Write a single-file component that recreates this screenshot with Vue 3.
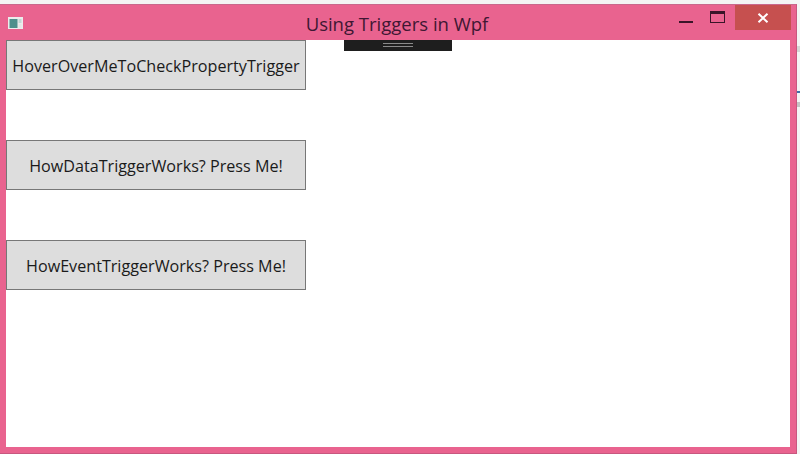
<template>
  <div class="desktop">
    <div class="window">
      <div class="title-bar">
        <svg class="app-icon" width="15" height="12" viewBox="0 0 15 12">
          <rect x="0" y="0" width="15" height="12" fill="#ececec" />
          <rect x="1.5" y="2" width="8" height="9" fill="#4f8f8c" />
          <rect x="10.5" y="2" width="3" height="4" fill="#c3d8d6" />
          <rect x="10.5" y="7" width="3" height="4" fill="#e6e6e6" />
        </svg>
        <span class="title">Using Triggers in Wpf</span>
        <div class="controls">
          <span class="min-btn"></span>
          <span class="max-btn"></span>
          <span class="close-btn">
            <svg width="12" height="10" viewBox="0 0 12 10">
              <path d="M1.5 0.8 L10.5 9.2 M10.5 0.8 L1.5 9.2" stroke="#fff" stroke-width="2" fill="none" />
            </svg>
          </span>
        </div>
      </div>
      <div class="content">
        <button v-for="label in buttons" :key="label" class="trigger-btn">{{ label }}</button>
        <div class="adorner"><span class="grip"></span></div>
      </div>
    </div>
    <div class="desktop-edge">
      <span class="edge-mark grey"></span>
      <span class="edge-mark blue"></span>
      <span class="edge-mark dim"></span>
    </div>
  </div>
</template>

<script setup>
const buttons = [
  'HoverOverMeToCheckPropertyTrigger',
  'HowDataTriggerWorks? Press Me!',
  'HowEventTriggerWorks? Press Me!'
]
</script>

<style>
html,
body {
  margin: 0;
  background: #fff;
}
</style>

<style scoped>
.desktop {
  display: flex;
  width: 800px;
  height: 454px;
  overflow: hidden;
  background: #f4f4f4;
  font-family: "Open Sans", "Noto Sans", sans-serif;
}

.window {
  display: flex;
  flex-direction: column;
  box-sizing: border-box;
  width: 797px;
  height: 450px;
  margin-top: 4px;
  background: #e9638f;
  border-top: 1px solid #c9688c;
  border-right: 1px solid #c8577f;
  border-bottom: 1px solid #c8577f;
}

.title-bar {
  position: relative;
  display: flex;
  align-items: center;
  justify-content: center;
  height: 35px;
  flex-shrink: 0;
}

.app-icon {
  position: absolute;
  left: 8px;
  top: 12px;
}

.title {
  margin-top: 1px;
  margin-right: 2px;
  font-size: 18.5px;
  color: #3f1733;
}

.controls {
  position: absolute;
  top: 0;
  right: 5px;
  display: flex;
  align-items: flex-start;
}

.min-btn {
  width: 14px;
  height: 2px;
  margin-top: 16px;
  margin-right: 17px;
  background: #3a1428;
}

.max-btn {
  box-sizing: border-box;
  width: 15px;
  height: 12px;
  margin-top: 6px;
  margin-right: 10px;
  border: 1px solid #3a1428;
  border-top-width: 3px;
}

.close-btn {
  display: flex;
  align-items: center;
  justify-content: center;
  width: 56px;
  height: 25px;
  background: #c6504f;
}

.content {
  position: relative;
  display: flex;
  flex-direction: column;
  align-items: flex-start;
  gap: 50px;
  box-sizing: border-box;
  width: 784px;
  height: 407px;
  margin-left: 6px;
  background: #fff;
}

.trigger-btn {
  box-sizing: border-box;
  width: 300px;
  height: 50px;
  padding: 2px 0 0;
  background: #dddddd;
  border: 1px solid #777;
  font-family: inherit;
  font-size: 16.15px;
  color: #1a1a1a;
}

.adorner {
  position: absolute;
  left: 338px;
  top: 0;
  display: flex;
  justify-content: center;
  width: 108px;
  height: 11px;
  background: #1e1e1e;
}

.grip {
  box-sizing: border-box;
  width: 30px;
  height: 4px;
  margin-top: 3px;
  border-top: 1px solid #8a8a8a;
  border-bottom: 1px solid #8a8a8a;
}

.desktop-edge {
  position: relative;
  flex: 1;
}

.edge-mark {
  position: absolute;
  left: 0;
  width: 3px;
}

.grey {
  top: 46px;
  height: 6px;
  background: #d6d6d6;
}

.blue {
  top: 91px;
  height: 2px;
  background: #3f6fa8;
}

.dim {
  top: 102px;
  height: 5px;
  background: #c4c4c4;
}
</style>
